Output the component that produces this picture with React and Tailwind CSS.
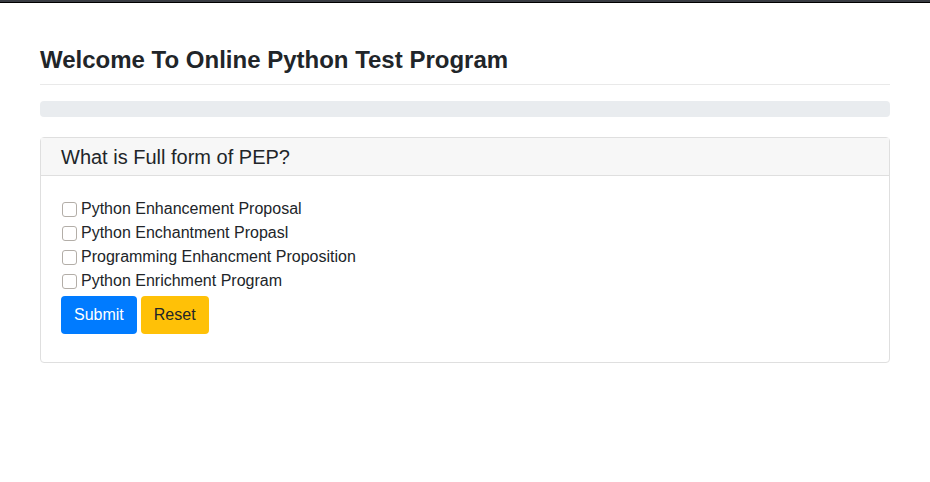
import React from 'react';

const options = [
  'Python Enhancement Proposal',
  'Python Enchantment Propasl',
  'Programming Enhancment Proposition',
  'Python Enrichment Program',
];

export default function App() {
  return (
    <div className="min-h-screen bg-white text-[#212529]" style={{ fontFamily: '"Liberation Sans", Arial, sans-serif' }}>
      {/* top window edge */}
      <div className="h-[2px] bg-[#393c42]" />
      <div className="h-px bg-black" />

      <div className="mx-[40px] pt-[42px]">
        <h3 className="text-[24px] font-bold leading-[29px]">Welcome To Online Python Test Program</h3>
        <div className="mt-[10px] h-px bg-[#e9e9e9]" />

        <div className="mt-[16px] h-4 rounded bg-[#e9ecef]" />

        <div className="mt-[20px] rounded border border-[#dfdfdf]">
          <div className="flex h-[38px] items-center border-b border-[#dfdfdf] bg-[#f7f7f7] px-5 text-[20px]">
            What is Full form of PEP?
          </div>
          <div className="px-5 pt-[21px] pb-[28px]">
            {options.map((o) => (
              <label key={o} className="flex h-6 items-center text-base">
                <input
                  type="checkbox"
                  className="mr-[4px] ml-[1px] h-[15px] w-[15px] appearance-none rounded-[3px] border border-[#b3aea8] bg-white"
                />
                {o}
              </label>
            ))}
            <div className="mt-[3px] flex gap-1">
              <button className="h-[38px] rounded bg-[#007bff] px-[13px] text-base text-white">Submit</button>
              <button className="h-[38px] rounded bg-[#ffc107] px-[13px] text-base text-[#212529]">Reset</button>
            </div>
          </div>
        </div>
      </div>
    </div>
  );
}
